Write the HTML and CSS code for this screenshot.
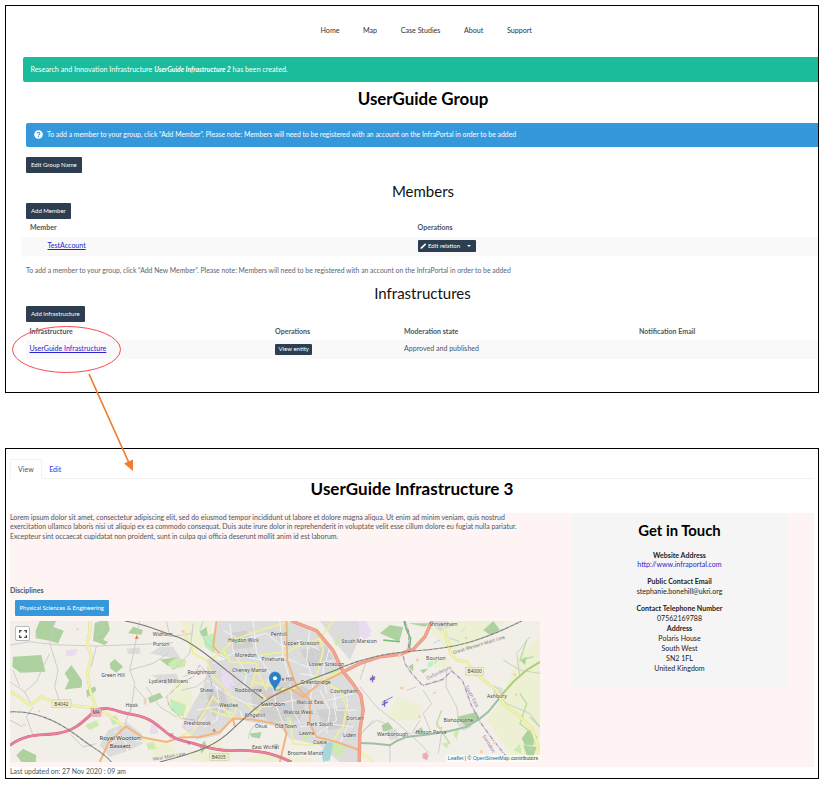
FILE: index.html
```html
<!DOCTYPE html>
<html lang="en">
<head>
<meta charset="utf-8">
<title>UserGuide Group</title>
<link rel="stylesheet" href="styles.css">
</head>
<body>
<main class="page">
  <section class="panel group">
    <nav class="nav"><a>Home</a><a>Map</a><a>Case Studies</a><a>About</a><a>Support</a></nav>
    <div class="alert success">Research and Innovation Infrastructure&nbsp;<em>UserGuide Infrastructure 2</em>&nbsp;has been created.</div>
    <h1>UserGuide Group</h1>
    <div class="alert info">
      <svg class="help" viewBox="0 0 18 18"><circle cx="9" cy="9" r="8.6" fill="#fff"/><path d="M6.2 7.2C6.2 3.7 11.8 3.9 11.8 7C11.8 9 9 8.9 9 10.8" fill="none" stroke="#3498db" stroke-width="2.1"/><circle cx="9" cy="13.4" r="1.3" fill="#3498db"/></svg>
      <span>To add a member to your group, click “Add Member”. Please note: Members will need to be registered with an account on the InfraPortal in order to be added</span>
    </div>
    <a class="btn">Edit Group Name</a>
    <h2 class="members-title">Members</h2>
    <a class="btn">Add Member</a>
    <div class="row head members"><span>Member</span><span>Operations</span></div>
    <div class="row body members wide"><span><a class="link indent">TestAccount</a></span><span><a class="btn small split"><svg class="pencil" viewBox="0 0 14 14"><path d="M1 13L2 9.4L10 1.4Q11 .6 12.3 1.8Q13.4 3 12.6 4L4.6 12Z" fill="#fff"/></svg>Edit relation<i class="caret"></i></a></span></div>
    <p class="note">To add a member to your group, click “Add New Member”. Please note: Members will need to be registered with an account on the InfraPortal in order to be added</p>
    <h2 class="infra-title">Infrastructures</h2>
    <a class="btn">Add Infrastructure</a>
    <div class="row head infra"><span>Infrastructure</span><span>Operations</span><span>Moderation state</span><span>Notification Email</span></div>
    <div class="row body infra"><span><a class="link">UserGuide Infrastructure</a></span><span><a class="btn small">View entity</a></span><span>Approved and published</span><span></span></div>
  </section>

  <section class="panel detail">
    <div class="tabs"><a class="tab active">View</a><a class="tab">Edit</a></div>
    <h1>UserGuide Infrastructure 3</h1>
    <div class="content">
      <div class="main">
        <p class="lorem">Lorem ipsum dolor sit amet, consectetur adipiscing elit, sed do eiusmod tempor incididunt ut labore et dolore magna aliqua. Ut enim ad minim veniam, quis nostrud<br>exercitation ullamco laboris nisi ut aliquip ex ea commodo consequat. Duis aute irure dolor in reprehenderit in voluptate velit esse cillum dolore eu fugiat nulla pariatur.<br>Excepteur sint occaecat cupidatat non proident, sunt in culpa qui officia deserunt mollit anim id est laborum.</p>
        <h3>Disciplines</h3>
        <a class="btn tag">Physical Sciences &amp; Engineering</a>
        <div class="map">
          <svg class="tiles" viewBox="31 33 1589 422" preserveAspectRatio="none">
            <rect x="31" y="33" width="1589" height="422" fill="#f2efe9"/>
            <!-- farmland and parks -->
            <g fill="#edf0d2">
              <path d="M1295 33H1520L1470 75L1400 110L1350 130L1290 60ZM1560 130L1620 80V455H1440L1530 430L1460 330L1500 270ZM520 215L560 215L580 260L570 320L535 330L500 290ZM420 380L510 400L530 430L470 440ZM640 390L700 430L690 455H600L560 440ZM780 430L900 440L960 455H720ZM1300 150L1350 150L1345 175L1300 170ZM540 33H640L625 90L590 130L560 90ZM1190 260L1270 290L1250 330L1160 330Z"/>
            </g>
            <!-- built-up areas -->
            <g fill="#dcdcdc">
              <path d="M655 33H880L950 62L1000 120L1035 190L1085 255L1090 300L1082 400L1078 455H1020L960 405L870 385L840 350L700 325L660 375L590 388L545 350L575 290L610 230L620 190L625 150L680 150L640 100Z"/>
              <path d="M325 360L380 335L425 370L430 400L390 420L330 440L300 405ZM450 130L480 110L520 110L545 150L500 140ZM455 195L530 190L540 215L500 222ZM380 115L420 112L422 132L385 132ZM1290 33H1340L1360 45L1320 65ZM1370 340L1400 330L1415 350L1390 362ZM1160 360L1190 355L1195 385L1170 390ZM1480 225L1510 235L1505 265L1482 260ZM960 33H1090L1080 80L1050 150L1010 100Z"/>
            </g>
            <g fill="#d0d0d0"><path d="M750 235L880 210L930 240L900 330L810 335L760 290ZM690 70L740 60L760 110L700 120ZM900 120L980 110L1000 150L930 170ZM950 300L1050 290L1050 350L980 360ZM620 250L670 235L690 300L640 320Z"/></g>
            <g fill="#eadcf0"><path d="M200 120L235 117L225 137L198 137ZM452 345L475 335L475 370L450 373ZM665 185L685 175L705 225L690 245L665 220ZM1075 33H1100L1115 65L1080 80ZM1080 60L1115 75L1090 90ZM555 340L590 330L590 350L560 360Z"/></g>
            <!-- woodland -->
            <g fill="#aed1a0">
              <path d="M108 62L120 33H170L160 50L192 62L175 100L150 92L108 85ZM40 140L125 135L137 185L62 188L38 170ZM195 190L215 165L247 210L246 232L195 238L208 210ZM330 160L345 147L370 170L350 188L332 175ZM260 240L285 228L290 240L262 262ZM385 70L400 50L430 60L425 74ZM50 435L70 415L110 435L108 455H65ZM445 262L480 248L490 262L450 280ZM480 148L530 142L540 165L505 168ZM285 40L300 33H325L330 60L310 90L325 95L315 105L280 92ZM600 65L620 50L625 80L605 78ZM1140 70L1170 45L1210 52L1198 95ZM1450 60L1480 33L1500 60L1470 75ZM1225 40H1290L1275 50ZM1145 345L1165 335L1180 355L1150 365ZM1240 370L1265 350L1275 375ZM1370 320L1430 305L1440 325L1400 350ZM1565 385L1585 358L1605 375L1600 405L1575 405ZM1570 405L1610 410L1600 440L1580 435ZM1225 170L1240 160L1240 185ZM1260 180L1285 175L1270 190ZM600 410L615 390L620 410L605 430ZM750 370L785 365L780 385L755 380ZM815 405L835 400L830 420ZM1560 150L1580 140L1575 165Z"/>
            </g>
            <g fill="#cdebb0"><path d="M505 160L525 145L560 150L555 170L515 178ZM330 320L350 315L358 338L340 345ZM255 345L290 330L300 345L270 360ZM510 265L560 285L550 320L515 300ZM610 80L640 70L655 110L640 130L615 110ZM700 90L730 85L730 105ZM790 130L810 125L810 145ZM840 60L870 50L870 70ZM1000 90L1020 80L1010 110ZM990 180L1015 175L1015 195L995 195ZM860 320L875 320L875 335L860 335ZM1000 400L1035 405L1030 440L985 420ZM900 370L930 375L920 395ZM1325 400L1350 395L1340 415ZM1380 350L1370 390L1360 370ZM1540 420L1560 400L1565 430ZM440 400L460 395L470 415L445 418ZM720 180L740 175L745 195ZM1005 235L1020 228L1025 250ZM660 130L680 120L690 145Z"/></g>
            <g fill="#b9f0c4"><path d="M512 272L545 290L540 312L520 300ZM615 85L635 80L648 112L630 120ZM330 322L346 318L352 335L338 342ZM1283 160L1300 150L1298 168L1285 172Z"/></g>
            <path d="M965 425L985 390L1000 400L990 450L970 455Z" fill="#a9d6d9"/>
            <g fill="none" stroke="#a9d3de" stroke-width="2.5"><path d="M610 33L600 60L620 100L650 130L680 150M690 220L720 250M745 385Q750 345 790 330M285 80L300 65M960 420L985 450M1300 100L1320 90M1350 85L1380 95M1385 65L1395 55"/></g>
            <!-- minor roads -->
            <g fill="none" stroke="#c9c8c8" stroke-width="2.6">
              <path d="M31 105L90 95L165 104L290 108L420 103L520 98M165 33L150 100L175 180L165 230L180 275M31 215L75 245L110 215L130 170L150 130M75 245L95 285M290 108L275 170M420 33L405 110L390 180L405 220L395 290L390 315M390 180L460 160L505 130M395 290L375 340M40 180L60 230M100 290L80 320L100 375M300 33L310 60M500 33L510 80L580 70M440 230L480 290L530 320M405 230L440 270M550 200L600 180M545 240L590 230L640 190M580 40L570 130L520 180M31 330L70 350M210 370L250 410L290 400"/>
              <path d="M1080 230L1130 290L1200 345L1250 390L1290 430M1270 240L1295 280L1270 310L1290 360M1340 180L1338 230L1370 290L1375 320M1305 160L1310 150M1120 330L1080 375M1170 400L1170 455M1325 370L1315 430M1080 210L1100 150M1220 240L1250 230M1490 250L1520 280L1590 310L1620 350M1510 150L1560 180L1620 190M1170 345L1130 330L1090 360M1235 370L1260 330M1330 210L1275 225M1590 80L1550 130L1560 200"/>
            </g>
            <g fill="none" stroke="#f7f7f7" stroke-width="2.6">
              <path d="M670 60L720 90L800 70L850 110L900 90L960 120M640 160L700 130L780 150L850 140L920 170L1000 150M690 40L700 120L740 190L730 240M760 33L770 130L810 190L800 240M840 33L850 140L870 210M930 60L920 150L940 210L930 290M990 110L970 180L980 250M620 210L680 250L740 280L800 290L880 270L950 280L1060 250M590 300L650 290L700 310M610 350L650 330L660 290L650 230M820 230L830 290L850 340M870 220L880 300L900 340M960 240L990 300L980 370M1000 230L1010 300L1070 300M900 350L980 340L1060 350M940 380L1010 330L1000 270M580 360L620 320M330 400L370 380L430 395M345 360L380 400L385 430M1020 190L960 200L900 190M720 300L740 350M1040 260L1050 330L1020 400"/>
            </g>
            <g fill="none" stroke="#c0c0c0" stroke-width="1" opacity=".75"><path d="M680 80L740 100L750 140M740 55L830 65L840 100M860 90L930 100L940 140M650 200L700 180L760 200M660 250L720 220M770 240L810 260L840 250M780 300L840 310L900 290M850 250L900 260L960 250M940 310L1000 320L1040 300M960 270L1050 280M600 260L640 270L670 260M590 330L640 350M920 330L960 370M1000 370L1050 380L1070 340M890 160L950 150M700 150L760 160L770 170M340 390L400 380M360 350L370 420"/></g>
            <!-- boundaries -->
            <g fill="none" stroke="#b08fb5" stroke-width="3.6" stroke-dasharray="14 3 3 3">
              <path d="M1215 33L1228 70L1225 115L1208 130L1215 160L1235 190L1268 226L1330 207L1355 182L1388 212L1412 280L1440 335L1480 390L1520 440"/>
              <path d="M545 218L580 200L600 165L630 200L640 240L620 290L590 330L545 325L510 290L500 260L545 218" stroke-width="2"/>
            </g>
            <path d="M1212 33L1220 60L1232 85L1228 120M1150 90L1200 95" fill="none" stroke="#79bd78" stroke-width="5"/>
            <!-- green A-roads -->
            <path d="M1080 398L1120 400L1170 405L1190 392L1220 380L1290 372L1350 362L1400 350L1440 325L1465 305L1485 280L1500 262" fill="none" stroke="#9dc0a2" stroke-width="6"/>
            <path d="M1500 260L1540 215L1580 180L1620 155" fill="none" stroke="#acd078" stroke-width="6"/>
            <g fill="none" stroke="#b8dda0" stroke-width="4"><path d="M1560 250L1580 280L1560 340L1610 380L1590 420M1590 320L1620 350M1325 300L1310 340L1350 400M1580 90L1560 150L1600 140"/></g>
            <!-- secondary roads -->
            <g fill="none" stroke="#d3d3a0" stroke-width="8.500"><path d="M270 33L271 60L263 100L275 140L263 190L272 245L288 290M31 243L65 265L90 285L125 260L165 277L230 287L300 295L330 318L370 345L375 350M1330 50L1340 80L1352 130L1370 150L1400 155L1425 190L1490 240L1510 280L1560 320L1595 355L1610 400L1620 440"/></g>
            <g fill="none" stroke="#f2f3a7" stroke-width="7"><path d="M270 33L271 60L263 100L275 140L263 190L272 245L288 290M31 243L65 265L90 285L125 260L165 277L230 287L300 295L330 318L370 345L375 350M1330 50L1340 80L1352 130L1370 150L1400 155L1425 190L1490 240L1510 280L1560 320L1595 355L1610 400L1620 440M1080 425L1120 455"/></g>
            <g fill="none" stroke="#eeee9c" stroke-width="5.500">
              <path d="M545 60L575 110L580 130L620 150L640 145L670 120L700 90L780 60L870 35M620 150L640 200L690 250L710 290L700 325M670 120L690 155L770 160L770 180L800 240M770 180L750 240L760 215L840 235L870 240L930 210L1000 195L1030 180M780 135L860 125L890 110L960 85L1000 33M960 85L970 120L950 200M580 365L610 310L640 260L700 325M740 280L770 310L800 270L780 250M870 330L880 400L930 405L1000 390L1030 350L1040 290L1020 240L950 205M630 300L690 320M545 375L580 365"/>
            </g>
            <!-- primary roads -->
            <g fill="none" stroke="#f3b57c" stroke-width="6">
              <path d="M300 455L325 400L355 370L378 348L430 382L500 395L540 382L600 380L660 365L700 325L760 328L850 345L860 370L840 455M700 325L705 350M650 33L645 70L640 110L660 130M860 33L862 150L890 230L930 270L930 340L950 380L1010 395L1080 420M1030 185L960 220L910 260L870 235L800 265M860 240L890 225"/>
            </g>
            <!-- trunk roads -->
            <g fill="none" stroke="#e58f78" stroke-width="10"><path d="M875 33L950 62L1000 122L1030 185L1055 215L1083 255L1090 300L1080 360L1078 455M1030 185L1080 160L1140 140L1200 133L1240 118L1275 80L1296 33"/></g>
            <g fill="none" stroke="#f5a58e" stroke-width="7"><path d="M875 33L950 62L1000 122L1030 185L1055 215L1083 255L1090 300L1080 360L1078 455M1030 185L1080 160L1140 140L1200 133L1240 118L1275 80L1296 33"/></g>
            <!-- motorway -->
            <path d="M31 405C85 365 130 378 175 369C235 360 255 325 290 300C325 285 355 307 400 313C480 325 490 380 550 392C600 402 630 420 690 421C780 417 820 430 875 455" fill="none" stroke="#d7688a" stroke-width="8.500"/>
            <path d="M31 405C85 365 130 378 175 369C235 360 255 325 290 300C325 285 355 307 400 313C480 325 490 380 550 392C600 402 630 420 690 421C780 417 820 430 875 455" fill="none" stroke="#e68199" stroke-width="6"/>
            <!-- railways -->
            <g fill="none" stroke="#777" stroke-width="3.2">
              <path d="M31 305C130 300 205 355 250 390C290 420 310 425 335 455M375 33C430 40 470 60 540 83C610 115 690 195 790 265M480 455C600 425 650 405 700 355C760 300 790 268 860 238C930 205 990 190 1030 170C1090 145 1150 130 1240 123C1370 115 1450 90 1565 33"/>
            </g>
            <g fill="none" stroke="#f4f4f4" stroke-width="1.2" stroke-dasharray="7 9"><path d="M31 305C130 300 205 355 250 390C290 420 310 425 335 455M1030 170C1090 145 1150 130 1240 123C1370 115 1450 90 1565 33"/></g>
            <!-- scattered farmsteads -->
            <g fill="#f6d0b5"><path d="M70 340h8v6h-8zM105 80h7v5h-7zM115 300h7v6h-7zM230 55h7v6h-7zM432 265h8v18h-8zM475 200h8v9h-8zM545 60h10v8h-10zM1195 130h7v12h-7zM1200 230h12v7h-12zM1248 145h9v9h-9zM1300 245h8v6h-8zM1395 80h7v7h-7zM1320 350h8v7h-8zM1440 420h9v8h-9zM1545 250h7v7h-7zM1255 315h8v8h-8zM1310 345h9v7h-9zM1480 395h8v6h-8zM1085 180h7v6h-7zM1540 190h8v7h-8z"/></g>
            <g fill="#f4a9b8"><path d="M1268 430l12 -4 6 10 -4 14 -14 -6z"/></g>
            <g fill="#e07b3c"><path d="M405 86L411 76L417 86ZM637 364L643 354L649 364Z"/></g>
            <g stroke="#7a62c4" stroke-width="4" fill="none"><path d="M1118 195V216M1110 210L1126 200M1111 203L1125 208M1154 270V290M1146 284L1164 275"/><path d="M1146 277L1178 260" stroke-width="2.5"/></g>
            <!-- road shields -->
            <g stroke-width="1.5"><rect x="157" y="269" width="57" height="23" fill="#eff0cf" stroke="#c3c59a"/><rect x="274" y="295" width="30" height="23" fill="#f0b5c4" stroke="#d88ba0"/><rect x="630" y="429" width="55" height="22" fill="#eff0cf" stroke="#c3c59a"/><rect x="1396" y="172" width="55" height="23" fill="#eff0cf" stroke="#c3c59a"/></g>
            <g class="ref"><text x="185" y="286">B4042</text><text x="289" y="312">M4</text><text x="657" y="445">B4005</text><text x="1424" y="189">B4000</text></g>
            <g class="tiny"><text x="516" y="377" transform="rotate(18 516 372)">15</text><text x="566" y="403" transform="rotate(18 566 398)">15</text></g>
            <g class="way"><text x="508" y="443" transform="rotate(-10 508 440)">West Main Line</text><text x="1437" y="109" transform="rotate(-17 1437 105)">Great Western Main Line</text></g>
            <g class="bound"><text x="1317" y="193" transform="rotate(-25 1317 189)">Oxfordshire</text><text x="1415" y="263" transform="rotate(62 1415 259)">South East</text><text x="1466" y="405" transform="rotate(58 1466 401)">Swindon</text></g>
            <g class="place">
              <text x="489" y="77">Widham</text><text x="484" y="109">Purton</text><text x="340" y="202">Green Hill</text><text x="506" y="219">Lydiard Millicent</text><text x="396" y="290">Hook</text>
              <text x="731" y="95">Haydon Wick</text><text x="837" y="77">Penhill</text><text x="905" y="106">Upper Stratton</text><text x="738" y="140">Moredon</text><text x="820" y="152">Pinehurst</text><text x="980" y="167">Lower Stratton</text><text x="749" y="187">Cheney Manor</text><text x="606" y="191">Roughmoor</text><text x="863" y="213">e Hill</text><text x="947" y="221">Greenbridge</text><text x="620" y="245">Shaw</text><text x="746" y="247">Rodbourne</text><text x="1032" y="248">Covingham</text><text x="931" y="280">Walcot East</text><text x="686" y="290">Westlea</text><text x="895" y="310">Walcot West</text><text x="765" y="320">Kingshill</text><text x="1065" y="329">Dorcan</text><text x="593" y="345">Freshbrook</text><text x="784" y="354">Okus</text><text x="858" y="352">Old Town</text><text x="960" y="346">Park South</text><text x="920" y="375">Lawns</text><text x="1049" y="381">Liden</text><text x="960" y="401">Coate</text><text x="797" y="416">East Wichel</text><text x="917" y="435">Broome Manor</text>
              <text x="1078" y="98">South Marston</text><text x="1330" y="47">Shrivenham</text><text x="1308" y="150">Bourton</text><text x="1491" y="262">Ashbury</text><text x="1375" y="336">Bishopstone</text><text x="1293" y="372">Hinton Parva</text><text x="1178" y="378">Wanborough</text>
            </g>
            <g class="town"><text x="819" y="287">Swindon</text><text x="361" y="389">Royal Wootton</text><text x="361" y="412">Bassett</text></g>
            <!-- marker -->
            <path d="M826 242L850 228L842 240Z" fill="#777" opacity=".45"/>
            <path d="M825 242C821 225 808 218 808 203A17.500 17.500 0 0 1 843 203C843 218 829 225 825 242Z" fill="#2a81cb" stroke="#226fb0" stroke-width="1.5"/><circle cx="825.500" cy="204" r="6" fill="#fff"/>
          </svg>
          <div class="fullscreen"><svg viewBox="0 0 24 24"><path d="M2 8V2H8M16 2H22V8M22 16V22H16M8 22H2V16" fill="none" stroke="#444" stroke-width="4"/></svg></div>
          <div class="credit"><a>Leaflet</a> | © <a>OpenStreetMap</a> contributors</div>
        </div>
      </div>
      <aside class="contact">
        <h2>Get in Touch</h2>
        <p><b>Website Address</b><br><a>http://www.infraportal.com</a></p>
        <p><b>Public Contact Email</b><br>stephanie.bonehill@ukri.org</p>
        <p><b>Contact Telephone Number</b><br>07562169788<br><b>Address</b><br>Polaris House<br>South West<br>SN2 1FL<br>United Kingdom</p>
      </aside>
    </div>
    <p class="updated">Last updated on: 27 Nov 2020 : 09 am</p>
  </section>
  <svg class="callout" viewBox="0 0 825 789"><ellipse cx="66.500" cy="349.500" rx="54" ry="23" fill="none" stroke="#fb4a50" stroke-width="1"/><path d="M89 374L129 463" stroke="#ed7d31" stroke-width="1.700"/><path d="M133 471L124 463.500L133 459.500Z" fill="#ed7d31"/></svg>
</main>
</body>
</html>
```
FILE: styles.css
```css
* { box-sizing: border-box; }
body { margin: 0; background: #fff; font: 7.05px/9.9px Lato, sans-serif; color: #4c5660; }
h1, h2, h3, p { margin: 0; }
.page { position: relative; width: 825px; height: 789px; padding: 5px; overflow: hidden; }
.panel { width: 814px; border: 1px solid #000; overflow: hidden; }
.group { height: 388px; padding-left: 20px; }
.detail { height: 331px; margin-top: 55px; padding: 10px 4px 0 4px; }

.nav { display: flex; gap: 23.500px; height: 51px; padding: 20px 0 0 294.500px; color: #333; font-size: 7.15px; }
.alert { display: flex; align-items: center; color: #fff; border-radius: 2px 0 0 2px; }
.success { height: 25px; margin-left: -3px; padding-left: 7.500px; background: #1abc9c; font-size: 7.17px; }
.success em { font-weight: 700; font-size: 6.8px; }
.info { height: 24.500px; padding-left: 7.500px; gap: 4.500px; background: #3498db; font-size: 6.85px; }
.help { width: 9px; height: 9px; }
h1 { color: #000; font-size: 17px; line-height: 20px; text-align: center; }
.group h1 { height: 40.500px; padding-top: 7px; padding-left: 2px; font-size: 16.9px; }
h2 { color: #111; font-size: 15px; line-height: 18px; text-align: center; font-weight: 400; }

.btn { display: flex; align-items: center; width: max-content; height: 16px; padding: 0 5px; border-radius: 1px; background: #2c3e50; color: #fff; font-size: 6.05px; line-height: 8px; }
.info + .btn { margin-top: 9.500px; }
.members-title { height: 30.500px; padding: 9px 0 0 2px; }
.row { display: grid; align-items: center; }
.members { grid-template-columns: 387.500px 1fr; padding-left: 4px; }
.infra { grid-template-columns: 245.500px 129px 235px 1fr; padding-left: 3.500px; }
.head { height: 17.500px; padding-top: 1px; font-weight: 700; }
.body { height: 19px; background: #f9f9f9; }
.wide { margin-left: -5.500px; padding-left: 9.500px; }
.link { color: #2a22d4; text-decoration: underline; text-decoration-thickness: 1px; }
.indent { padding-left: 17.500px; }
.small { height: 11.500px; padding: 0 3.500px; }
.split { padding: 0 5px 0 2px; }
.pencil { width: 6.500px; height: 6.500px; margin-right: 2px; }
.caret { margin-left: 7px; border: 2px solid transparent; border-top-color: #fff; border-bottom: 0; }
.note { padding-top: 10.500px; font-size: 6.85px; color: #5a6570; }
.infra-title { height: 30.500px; padding: 8px 0 0 1px; }

.tabs { display: flex; height: 20px; border-bottom: 1px solid #f0f2f3; }
.tab { height: 20px; padding: 5.500px 7.500px; color: #4a22dd; }
.tab.active { border: 1px solid #f0f2f3; border-bottom-color: #fff; padding: 4.500px 7px; color: #4c5660; }
.detail h1 { height: 33.500px; font-size: 17.05px; line-height: 19px; }
.content { display: flex; align-items: flex-start; height: 254px; background: #fef4f3; }
.main { width: 530px; }
.lorem { height: 72px; font-size: 6.98px; white-space: nowrap; }
h3 { font-size: 7px; font-weight: 700; line-height: 10px; height: 15px; }
.tag { margin-left: 4.500px; background: #3498db; }
.map { position: relative; height: 141px; margin-top: 5.500px; overflow: hidden; }
.tiles { display: block; width: 100%; height: 100%; }
.tiles text { font-family: "Noto Sans", sans-serif; text-anchor: middle; }
.place text { font-size: 15.3px; fill: #444; stroke: #fff; stroke-width: 2px; stroke-opacity: .5; paint-order: stroke; }
.town text { font-size: 18px; fill: #333; stroke: #fff; stroke-width: 2px; stroke-opacity: .5; paint-order: stroke; }
.ref text { font-size: 14.5px; fill: #444; }
.tiny text { font-size: 11px; fill: #b0405c; }
.way text { font-size: 14px; fill: #777; }
.bound text { font-size: 14.5px; fill: #9a7aa5; }
.fullscreen { position: absolute; left: 5px; top: 5px; display: grid; place-items: center; width: 15px; height: 15px; border: 1px solid #bbb; border-radius: 2px; background: #fff; }
.fullscreen svg { width: 8px; height: 8px; }
.credit { position: absolute; right: 0; bottom: 0; padding: 0 2px; background: rgba(255,255,255,.7); color: #333; font: 5.2px/7px "Liberation Sans", sans-serif; }
.credit a { color: #0078a8; }
.contact { width: 215px; height: 174.500px; margin-left: 32px; background: #f5f5f5; padding-top: 8.500px; text-align: center; color: #222; }
.contact h2 { height: 29.500px; color: #000; font-size: 14.85px; font-weight: 700; }
.contact p { margin-bottom: 7px; }
.contact a { color: #2a22d4; }
.updated { font-size: 6.9px; }
.callout { position: absolute; left: 0; top: 0; width: 825px; height: 789px; pointer-events: none; }
```
